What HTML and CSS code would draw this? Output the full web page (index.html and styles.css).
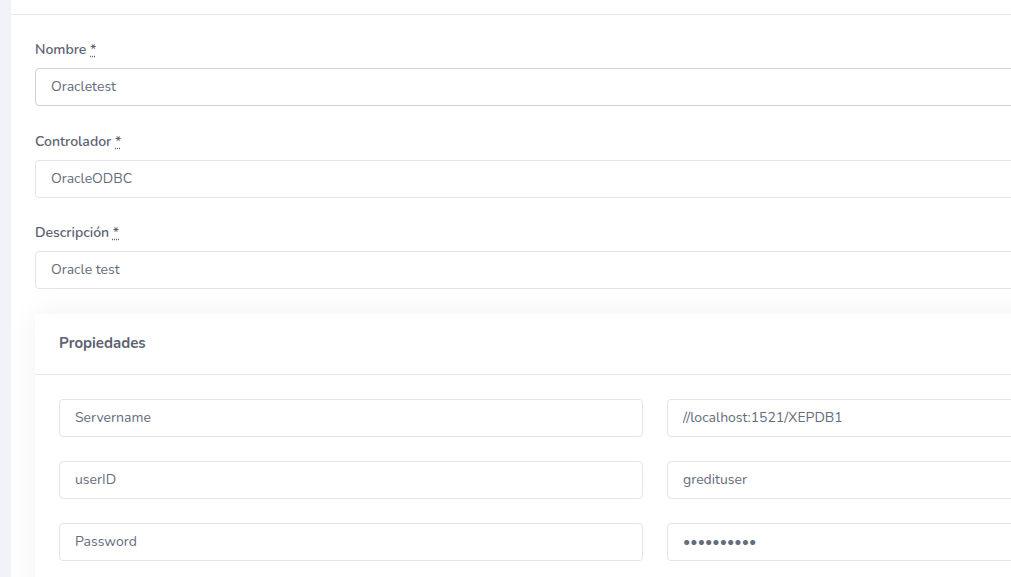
FILE: index.html
```html
<!DOCTYPE html>
<html lang="es">
<head>
<meta charset="utf-8">
<title>Conexión ODBC</title>
<link rel="stylesheet" href="styles.css">
</head>
<body>
<div class="rail"></div>
<main class="panel">
  <div class="panel-top"></div>
  <form class="form">
    <div class="group">
      <label class="label" for="nombre">Nombre <abbr title="obligatorio">*</abbr></label>
      <input id="nombre" class="field field-strong" type="text" value="Oracletest">
    </div>
    <div class="group">
      <label class="label" for="controlador">Controlador <abbr title="obligatorio">*</abbr></label>
      <input id="controlador" class="field" type="text" value="OracleODBC">
    </div>
    <div class="group">
      <label class="label" for="descripcion">Descripción <abbr title="obligatorio">*</abbr></label>
      <input id="descripcion" class="field" type="text" value="Oracle test">
    </div>

    <section class="card">
      <header class="card-header">Propiedades</header>
      <div class="card-body">
        <div class="prop-row">
          <input class="field" type="text" value="Servername">
          <input class="field" type="text" value="//localhost:1521/XEPDB1">
        </div>
        <div class="prop-row">
          <input class="field" type="text" value="userID">
          <input class="field" type="text" value="gredituser">
        </div>
        <div class="prop-row">
          <input class="field" type="text" value="Password">
          <input class="field" type="password" value="0123456789">
        </div>
      </div>
    </section>
  </form>
</main>
</body>
</html>
```

FILE: styles.css
```css
html, body {
  margin: 0;
  height: 100%;
}

body {
  display: flex;
  background: #f1f3f8;
  overflow: hidden;
  font-family: "Nunito", Lato, "Open Sans", sans-serif;
  font-size: 14px;
  color: #5c6271;
}

.rail {
  flex: 0 0 11px;
}

.panel {
  flex: 0 0 auto;
  background: #ffffff;
  min-height: 100%;
}

.panel-top {
  height: 14px;
  border-bottom: 1px solid #e4e9ef;
}

.form {
  width: 1240px;
  padding: 24px 24px 0 24px;
}

.group {
  margin-bottom: 24.5px;
}

.label {
  display: block;
  height: 21px;
  line-height: 21px;
  margin-bottom: 8px;
  font-weight: 600;
  color: #5c6271;
}

.label abbr {
  text-decoration: underline dotted;
  text-underline-offset: 2px;
  cursor: help;
}

.field {
  display: block;
  box-sizing: border-box;
  width: 100%;
  height: 38px;
  padding: 0 15px 1px;
  border: 1px solid #e1e4e9;
  border-radius: 4px;
  background: #fff;
  font: inherit;
  color: #656c7c;
  outline: none;
}

.field-strong {
  border-color: #cdd0d4;
}

.card {
  background: #fff;
  box-shadow: 0 0 28px rgba(30, 40, 70, 0.06);
}

.card-header {
  height: 60px;
  line-height: 59px;
  padding: 0 24px;
  border-bottom: 1px solid #e4e9ef;
  font-weight: 700;
  font-size: 15px;
  color: #5c6271;
}

.card-body {
  padding: 24px;
}

.prop-row {
  display: grid;
  grid-template-columns: 1fr 1fr;
  column-gap: 24px;
  margin-bottom: 24px;
}
```
